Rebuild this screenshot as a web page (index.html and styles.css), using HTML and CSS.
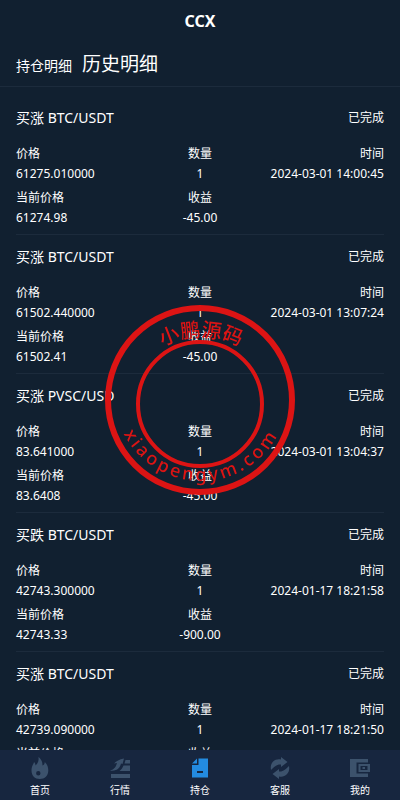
FILE: index.html
```html
<!DOCTYPE html>
<html lang="zh-CN">
<head>
<meta charset="utf-8">
<meta name="viewport" content="width=device-width, initial-scale=1">
<title>CCX</title>
<link rel="stylesheet" href="styles.css">
</head>
<body>
<header class="header"><h1>CCX</h1></header>
<nav class="tabs">
  <a class="tab" href="#positions">持仓明细</a>
  <a class="tab tab-active" href="#history">历史明细</a>
</nav>
<main class="orders">
  <article class="order">
    <div class="order-head"><h2>买涨 BTC/USDT</h2><span class="status">已完成</span></div>
    <dl class="fields">
      <div><dt>价格</dt><dd>61275.010000</dd></div>
      <div><dt>数量</dt><dd>1</dd></div>
      <div><dt>时间</dt><dd>2024-03-01 14:00:45</dd></div>
      <div><dt>当前价格</dt><dd>61274.98</dd></div>
      <div><dt>收益</dt><dd>-45.00</dd></div>
    </dl>
  </article>
  <article class="order">
    <div class="order-head"><h2>买涨 BTC/USDT</h2><span class="status">已完成</span></div>
    <dl class="fields">
      <div><dt>价格</dt><dd>61502.440000</dd></div>
      <div><dt>数量</dt><dd>1</dd></div>
      <div><dt>时间</dt><dd>2024-03-01 13:07:24</dd></div>
      <div><dt>当前价格</dt><dd>61502.41</dd></div>
      <div><dt>收益</dt><dd>-45.00</dd></div>
    </dl>
  </article>
  <article class="order">
    <div class="order-head"><h2>买涨 PVSC/USD</h2><span class="status">已完成</span></div>
    <dl class="fields">
      <div><dt>价格</dt><dd>83.641000</dd></div>
      <div><dt>数量</dt><dd>1</dd></div>
      <div><dt>时间</dt><dd>2024-03-01 13:04:37</dd></div>
      <div><dt>当前价格</dt><dd>83.6408</dd></div>
      <div><dt>收益</dt><dd>-45.00</dd></div>
    </dl>
  </article>
  <article class="order">
    <div class="order-head"><h2>买跌 BTC/USDT</h2><span class="status">已完成</span></div>
    <dl class="fields">
      <div><dt>价格</dt><dd>42743.300000</dd></div>
      <div><dt>数量</dt><dd>1</dd></div>
      <div><dt>时间</dt><dd>2024-01-17 18:21:58</dd></div>
      <div><dt>当前价格</dt><dd>42743.33</dd></div>
      <div><dt>收益</dt><dd>-900.00</dd></div>
    </dl>
  </article>
  <article class="order">
    <div class="order-head"><h2>买涨 BTC/USDT</h2><span class="status">已完成</span></div>
    <dl class="fields">
      <div><dt>价格</dt><dd>42739.090000</dd></div>
      <div><dt>数量</dt><dd>1</dd></div>
      <div><dt>时间</dt><dd>2024-01-17 18:21:50</dd></div>
      <div><dt>当前价格</dt><dd></dd></div>
      <div><dt>收益</dt><dd></dd></div>
    </dl>
  </article>
</main>

<svg class="stamp" viewBox="0 0 190 190" role="img" aria-label="小鹏源码 xiaopengym.com">
  <defs>
    <path id="arc-top" d="M14 114a82 82 0 0 1 164 0"/>
    <path id="arc-bottom" d="M9 89a87 87 0 0 0 174 0"/>
  </defs>
  <circle cx="95" cy="95" r="92" stroke-width="6"/>
  <circle cx="95" cy="99" r="62" stroke-width="4"/>
  <text class="stamp-cn"><textPath href="#arc-top" startOffset="50%">小鹏源码</textPath></text>
  <text class="stamp-url"><textPath href="#arc-bottom" startOffset="50%">xiaopengym.com</textPath></text>
</svg>

<nav class="tabbar">
  <a href="#home">
    <svg viewBox="0 0 20 22"><path fill-rule="evenodd" d="M8.500 0C12 3 12.500 5.500 12.500 8.500 14 8 14.800 6.500 14.800 5c2.700 2.500 3.500 5.500 3.500 8.500 0 5-3.500 8.500-8.500 8.500s-8.300-3.500-8.300-8.500C1.500 9 3.500 7.500 4 5c1 1 1.500 2 1.500 3.500C8 6.500 9 3.500 8.500 0zM8.300 14a2.200 2.200 0 1 0 0 4.400 2.200 2.200 0 0 0 0-4.400z"/></svg>
    <span>首页</span>
  </a>
  <a href="#market">
    <svg viewBox="0 0 20 22"><path d="M1 17h19v4H1zM0 13.500c4.500-1 6-4 7-7.500L4 6.500C6.500 4 9 2.500 14 1.500L12.500 7l-1.500-.5C10 11 7 14.500 0 13.500zM15.500 3H20v3.500h-5.500zM13.500 8.500H20V14H9.500c2-1.500 3.200-3.200 4-5.500z"/></svg>
    <span>行情</span>
  </a>
  <a class="current" href="#positions">
    <svg viewBox="0 0 20 22"><path fill-rule="evenodd" d="M8.500 1.500H18v19H2V8h6.500zM7 14v2h6v-2zM7 1.500v5H2z"/></svg>
    <span>持仓</span>
  </a>
  <a href="#service">
    <svg viewBox="0 0 20 22"><path d="M1 13C-.5 6 5 1 11 2.500V0l6.500 5L11 10V7.500C7 7 4 10 1 13zM19 9c1.500 7-4 12-10 10.500V22l-6.500-5L9 12v2.500c4 .5 7-2.500 10-5.500z"/></svg>
    <span>客服</span>
  </a>
  <a href="#me">
    <svg viewBox="0 0 20 22"><path fill-rule="evenodd" d="M0 2h18v3.500H6.500v11H18V20H0zM8.500 7H20v8H8.500zM10.500 9v4h7V9zM12.500 10h2.500v2h-2.500z"/></svg>
    <span>我的</span>
  </a>
</nav>
</body>
</html>
```
FILE: styles.css
```css
* {
  box-sizing: border-box;
}

body {
  margin: 0;
  padding-bottom: 50px;
  background: #112030;
  color: #fff;
  font: 12px/20px "Noto Sans", "Noto Sans CJK SC", sans-serif;
  scrollbar-width: none;
}

h1, h2, dl, dd {
  margin: 0;
}

a {
  color: inherit;
  text-decoration: none;
}

.header {
  text-align: center;
}

.header h1 {
  font-size: 16px;
  line-height: 42px;
}

.tabs {
  display: flex;
  align-items: baseline;
  gap: 10px;
  height: 45px;
  padding: 0 16px;
  border-bottom: 1px solid #1c2b3c;
}

.tab {
  font-size: 14px;
  line-height: 44px;
}

.tab-active {
  font-size: 19px;
}

.orders {
  padding: 9px 16px 0;
}

.order {
  padding: 11px 0 6px;
  border-bottom: 1px solid #1c2b3c;
}

.order-head {
  display: flex;
  justify-content: space-between;
  align-items: center;
  margin-bottom: 16px;
}

.order-head h2 {
  font-size: 14px;
  font-weight: 400;
  line-height: 21px;
}

.fields {
  display: grid;
  grid-template-columns: repeat(3, 1fr);
  row-gap: 4px;
  text-align: center;
}

.fields div:nth-child(3n + 1) {
  text-align: left;
}

.fields div:nth-child(3n) {
  text-align: right;
}

.fields dd {
  min-height: 20px;
  white-space: nowrap;
}

.stamp {
  position: fixed;
  top: 50%;
  left: 50%;
  width: 190px;
  height: 190px;
  transform: translate(-50%, -50%);
  fill: none;
  stroke: #dc1414;
  pointer-events: none;
}

.stamp text {
  fill: #dc1414;
  stroke: none;
  text-anchor: middle;
}

.stamp-cn {
  font-size: 20px;
  font-weight: 500;
}

.stamp-url {
  font-size: 18px;
  font-weight: 500;
  letter-spacing: 3px;
}

.tabbar {
  position: fixed;
  right: 0;
  bottom: 0;
  left: 0;
  display: grid;
  grid-template-columns: repeat(5, 1fr);
  height: 50px;
  padding-top: 7px;
  background: #17263f;
}

.tabbar a {
  display: flex;
  flex-direction: column;
  align-items: center;
  gap: 4px;
  font-size: 10px;
  line-height: 14px;
}

.tabbar svg {
  width: 20px;
  height: 22px;
  fill: #3c526c;
}

.tabbar .current svg {
  fill: #238be0;
}
```
